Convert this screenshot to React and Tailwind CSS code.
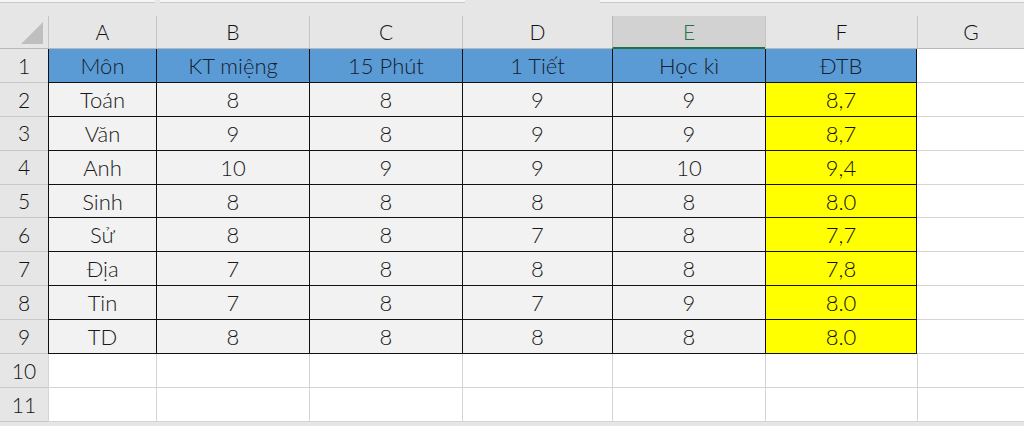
import React from "react";

const cols = ["A", "B", "C", "D", "E", "F", "G"];
const header = ["Môn", "KT miệng", "15 Phút", "1 Tiết", "Học kì", "ĐTB"];
const rows = [
  ["Toán", "8", "8", "9", "9", "8,7"],
  ["Văn", "9", "8", "9", "9", "8,7"],
  ["Anh", "10", "9", "9", "10", "9,4"],
  ["Sinh", "8", "8", "8", "8", "8.0"],
  ["Sử", "8", "8", "7", "8", "7,7"],
  ["Địa", "7", "8", "8", "8", "7,8"],
  ["Tin", "7", "8", "7", "9", "8.0"],
  ["TD", "8", "8", "8", "8", "8.0"],
];

const font = { fontFamily: "Lato, 'Open Sans', sans-serif" };

function RowHead({ n }) {
  return (
    <div className="flex items-center justify-center bg-[#e6e6e6] border-b border-[#c9c9c9] text-[21px] font-light text-[#111]">
      {n}
    </div>
  );
}

export default function App() {
  return (
    <div className="w-[1024px] h-[426px] overflow-hidden bg-[#e6e6e6] text-[#111]" style={font}>
      {/* top strip */}
      <div className="relative h-[16px] bg-[#e6e6e6]">
        <div className="absolute left-0 top-0 w-[155px] h-[3px] bg-[#f5f5f5] border-b border-[#c9c9c9]" />
        <div className="absolute left-[160px] top-0 w-[305px] h-[3px] bg-[#f5f5f5] border-b border-[#c9c9c9]" />
        <div className="absolute left-[600px] top-0 w-[424px] h-[3px] bg-[#f5f5f5] border-b border-[#c9c9c9]" />
      </div>
      <div
        className="grid"
        style={{
          gridTemplateColumns: "48px 108px 153px 153px 150px 153px 152px 1fr",
          gridTemplateRows: "33px repeat(11, 33.9px)",
        }}
      >
        {/* corner */}
        <div className="relative bg-[#e6e6e6] border-b border-[#b8b8b8]">
          <svg className="absolute left-[21px] top-[6px]" width="22" height="22" viewBox="0 0 22 22">
            <polygon points="22,0 22,22 0,22" fill="#bfbfbf" />
          </svg>
        </div>
        {cols.map((c) =>
          c === "E" ? (
            <div
              key={c}
              className="flex items-center justify-center bg-[#d2d2d2] border-l border-[#b8b8b8] border-b-2 border-b-[#217346] text-[21px] font-light text-[#217346]"
            >
              {c}
            </div>
          ) : (
            <div
              key={c}
              className="flex items-center justify-center bg-[#e6e6e6] border-l border-[#c4c4c4] border-b border-b-[#b8b8b8] text-[21px] font-light text-[#111]"
            >
              {c}
            </div>
          )
        )}

        {/* row 1 */}
        <RowHead n={1} />
        {header.map((h, i) => (
          <div
            key={h}
            className="flex items-center justify-center bg-[#5b9bd5] border-l border-b border-[#111] text-[22px] font-light text-[#14202e]"
            style={i === 5 ? { borderRightWidth: 1, borderRightColor: "#111", borderRightStyle: "solid" } : undefined}
          >
            {h}
          </div>
        ))}
        <div className="bg-white border-b border-[#d4d4d4]" />

        {rows.map((r, ri) => (
          <React.Fragment key={ri}>
            <RowHead n={ri + 2} />
            {r.map((v, i) => (
              <div
                key={i}
                className={
                  "flex items-center justify-center border-l border-b border-[#111] text-[22px] font-light " +
                  (i === 5 ? "bg-[#ffff00] border-r text-[#111]" : "bg-[#f2f2f2] text-[#1a1a1a]")
                }
              >
                {v}
              </div>
            ))}
            <div className="bg-white border-b border-[#d4d4d4]" />
          </React.Fragment>
        ))}

        {[10, 11].map((n) => (
          <React.Fragment key={n}>
            <RowHead n={n} />
            {cols.map((c) => (
              <div key={c} className="bg-white border-l border-b border-[#d4d4d4]" />
            ))}
          </React.Fragment>
        ))}
      </div>
    </div>
  );
}
